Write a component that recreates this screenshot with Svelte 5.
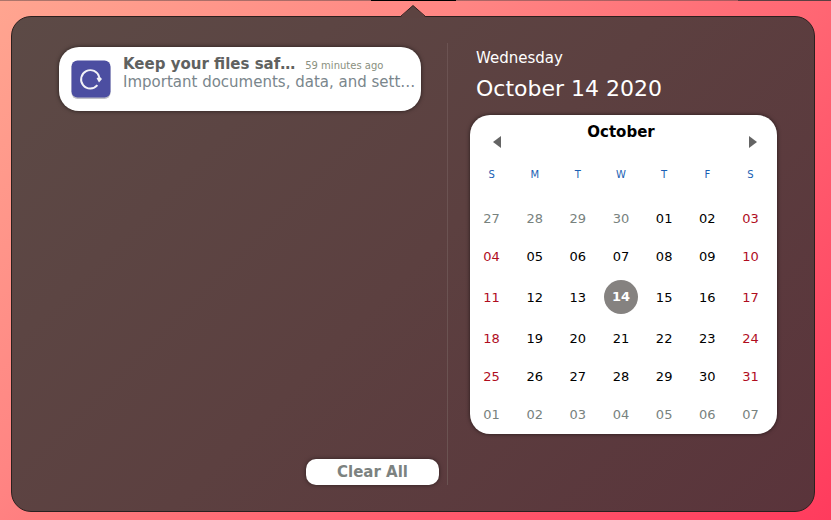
<script>
  const weekdays = ['S', 'M', 'T', 'W', 'T', 'F', 'S'];
  const first = new Date(2020, 8, 27);
  const today = 14;

  const weeks = Array.from({ length: 6 }, (_, w) =>
    Array.from({ length: 7 }, (_, d) => {
      const date = new Date(first.getFullYear(), first.getMonth(), first.getDate() + w * 7 + d);
      const other = date.getMonth() !== 9;
      return {
        label: String(date.getDate()).padStart(2, '0'),
        other,
        weekend: !other && (d === 0 || d === 6),
        today: !other && date.getDate() === today
      };
    })
  );
</script>

<div class="desktop">
  <div class="topbar"><span class="clock-underline"></span><span class="tray"></span></div>
  <main class="panel">
    <svg class="pointer" width="26" height="13" viewBox="0 0 26 13" aria-hidden="true">
      <path d="M0 13V12L1 11.5L13 0.5L25 11.5L26 12V13Z" fill="#5c4341" />
      <path d="M0.5 11.5L13 0.5L25.5 11.5" fill="none" stroke="#2b201f" />
    </svg>

    <section class="messages">
      <article class="notification">
        <svg class="icon" width="40" height="40" viewBox="0 0 40 40" aria-hidden="true">
          <rect x="0.5" y="2" width="39" height="37" rx="6" fill="#bfbfc6" />
          <rect x="0.5" y="0.5" width="39" height="37" rx="6" fill="#4c4ea1" />
          <path d="M26.4 25.2A9.2 9.2 0 1 1 28.2 17" fill="none" stroke="#f2f2f7" stroke-width="1.9" />
          <path d="M25.6 18.2L28.6 16.4L31 19L28 22.4Z" fill="#f2f2f7" />
        </svg>
        <div class="body">
          <div class="heading">
            <h2>Keep your files saf…</h2>
            <time>59 minutes ago</time>
          </div>
          <p>Important documents, data, and sett…</p>
        </div>
      </article>
      <button class="clear" type="button">Clear All</button>
    </section>

    <section class="date">
      <header>
        <div class="weekday">Wednesday</div>
        <h1>October 14 2020</h1>
      </header>
      <div class="calendar">
        <div class="month">
          <button type="button" aria-label="Previous month">
            <svg width="8" height="12" viewBox="0 0 8 12"><path d="M8 0V12L0 6Z" fill="#646464" /></svg>
          </button>
          <h3>October</h3>
          <button type="button" aria-label="Next month">
            <svg width="8" height="12" viewBox="0 0 8 12"><path d="M0 0V12L8 6Z" fill="#646464" /></svg>
          </button>
        </div>
        <table>
          <thead>
            <tr>{#each weekdays as day}<th scope="col">{day}</th>{/each}</tr>
          </thead>
          <tbody>
            {#each weeks as week}
              <tr>
                {#each week as day}
                  <td class:other={day.other} class:weekend={day.weekend}>
                    {#if day.today}<span class="today">{day.label}</span>{:else}{day.label}{/if}
                  </td>
                {/each}
              </tr>
            {/each}
          </tbody>
        </table>
      </div>
    </section>
  </main>
</div>

<style>
  :global(body) {
    margin: 0;
    font-family: 'DejaVu Sans', sans-serif;
  }
  h1, h2, h3, p {
    margin: 0;
  }
  button {
    font: inherit;
    border: 0;
    padding: 0;
    cursor: pointer;
  }
  .desktop {
    position: relative;
    box-sizing: border-box;
    min-height: 100vh;
    padding: 16px 16px 8px 11px;
    display: flex;
    background: linear-gradient(135deg, #ffa590 0%, #ff8583 35%, #ff5c6e 70%, #ff3b5d 100%);
  }
  .topbar {
    position: absolute;
    inset: 0 0 auto 0;
    height: 1px;
    background: rgba(90, 70, 70, 0.5);
  }
  .clock-underline,
  .tray {
    position: absolute;
    top: 0;
    height: 1px;
    left: 371px;
    width: 85px;
    background: #000;
  }
  .tray {
    left: 738px;
    right: 0;
    width: auto;
    background: #5c3f42;
  }
  .panel {
    position: relative;
    flex: 1;
    min-width: 0;
    box-sizing: border-box;
    display: flex;
    padding: 26px 37px 26px 47px;
    border: 1px solid #2b201f;
    border-radius: 20px;
    background: linear-gradient(135deg, #5c4a46 0%, #5c4040 50%, #5a343b 100%);
  }
  .pointer {
    position: absolute;
    left: 388px;
    top: -12px;
  }
  .messages {
    flex: 1;
    min-width: 0;
    display: flex;
    flex-direction: column;
    justify-content: space-between;
    padding: 4px 8px 0 0;
    border-right: 1px solid #6b5352;
  }
  .notification {
    box-sizing: border-box;
    height: 64px;
    display: flex;
    gap: 12px;
    margin-right: 18px;
    padding: 8px 4px 8px 12px;
    border-radius: 20px;
    background: #fff;
    box-shadow: 0 0 4px rgba(0, 0, 0, 0.6);
  }
  .icon {
    flex: none;
    margin-top: 5px;
  }
  .body {
    min-width: 0;
    white-space: nowrap;
  }
  .heading {
    display: flex;
    align-items: baseline;
    gap: 10px;
  }
  h2 {
    font-size: 15px;
    line-height: 18px;
    color: #5f6160;
  }
  time {
    font-size: 10px;
    color: #8a9080;
  }
  p {
    font-size: 15px;
    line-height: 18px;
    color: #7a868c;
  }
  .clear {
    align-self: flex-end;
    width: 133px;
    height: 26px;
    border-radius: 10px;
    background: #fff;
    color: #7c8280;
    font-size: 15px;
    font-weight: bold;
    box-shadow: 0 0 4px rgba(0, 0, 0, 0.5);
  }
  .date {
    width: 307px;
    flex: none;
    margin-left: 22px;
  }
  header {
    padding: 5px 6px 0;
    height: 67px;
    color: #fff;
  }
  .weekday {
    font-size: 15px;
    line-height: 20px;
  }
  h1 {
    margin-top: 7px;
    font-size: 22px;
    line-height: 28px;
    font-weight: normal;
  }
  .calendar {
    box-sizing: border-box;
    height: 319px;
    border-radius: 20px;
    background: #fff;
    box-shadow: 0 0 4px rgba(0, 0, 0, 0.6);
  }
  .month {
    display: flex;
    padding: 8px 20px 0 23px;
  }
  .month button {
    display: flex;
    padding-top: 13px;
    background: none;
  }
  h3 {
    flex: 1;
    padding-right: 8px;
    text-align: center;
    font-size: 15px;
    line-height: 18px;
  }
  table {
    width: 302px;
    margin-top: 13px;
    table-layout: fixed;
    border-collapse: collapse;
    font-size: 13px;
  }
  th {
    height: 38px;
    padding: 0 0 12px;
    box-sizing: border-box;
    vertical-align: middle;
    font-size: 10px;
    font-weight: normal;
    color: #1a5fb4;
  }
  td {
    height: 38px;
    padding: 0;
    text-align: center;
    color: #000;
  }
  tbody tr:nth-child(3) td {
    height: 44px;
  }
  .other {
    color: #78827e;
  }
  .weekend {
    color: #b00d1e;
  }
  .today {
    display: block;
    width: 34px;
    margin: 0 auto;
    line-height: 34px;
    border-radius: 50%;
    background: #858280;
    color: #fff;
    font-weight: bold;
  }
</style>
